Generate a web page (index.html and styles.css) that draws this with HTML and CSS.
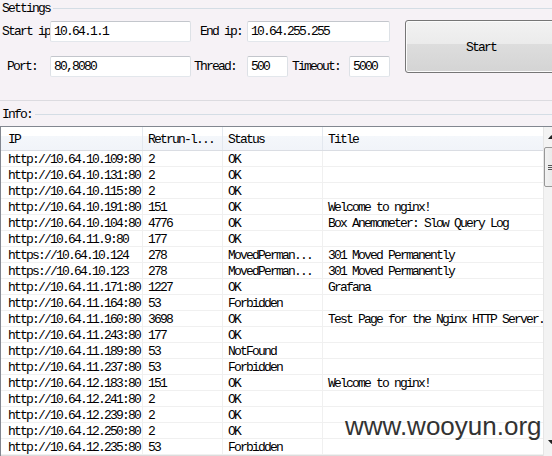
FILE: index.html
```html
<!DOCTYPE html>
<html>
<head>
<meta charset="utf-8">
<link rel="stylesheet" href="styles.css">
</head>
<body>
<div class="window">
  <section class="settings">
    <div class="legend"><span class="legend-text">Settings</span><span class="legend-line"></span></div>
    <div class="settings-body">
      <div class="fields">
        <div class="row">
          <label class="lbl lbl-start">Start ip</label>
          <div class="input w-ip">10.64.1.1</div>
          <label class="lbl lbl-end">End ip:</label>
          <div class="input w-ip2">10.64.255.255</div>
        </div>
        <div class="row">
          <label class="lbl lbl-port">Port:</label>
          <div class="input w-ip">80,8080</div>
          <label class="lbl lbl-thread">Thread:</label>
          <div class="input w-small">500</div>
          <label class="lbl lbl-timeout">Timeout:</label>
          <div class="input w-small">5000</div>
        </div>
      </div>
      <button class="start-btn">Start</button>
    </div>
  </section>
  <div class="legend info-legend"><span class="legend-text">Info:</span><span class="legend-line"></span></div>
  <div class="frame">
    <div class="list">
      <div class="hrow">
        <div class="c c1">IP</div>
        <div class="c c2">Retrun-l...</div>
        <div class="c c3">Status</div>
        <div class="c c4">Title</div>
      </div>
      <div class="rows">
        <div class="drow"><div class="c c1">http://10.64.10.109:80</div><div class="c c2">2</div><div class="c c3">OK</div><div class="c c4"></div></div>
        <div class="drow"><div class="c c1">http://10.64.10.131:80</div><div class="c c2">2</div><div class="c c3">OK</div><div class="c c4"></div></div>
        <div class="drow"><div class="c c1">http://10.64.10.115:80</div><div class="c c2">2</div><div class="c c3">OK</div><div class="c c4"></div></div>
        <div class="drow"><div class="c c1">http://10.64.10.191:80</div><div class="c c2">151</div><div class="c c3">OK</div><div class="c c4">Welcome to nginx!</div></div>
        <div class="drow"><div class="c c1">http://10.64.10.104:80</div><div class="c c2">4776</div><div class="c c3">OK</div><div class="c c4">Box Anemometer: Slow Query Log</div></div>
        <div class="drow"><div class="c c1">http://10.64.11.9:80</div><div class="c c2">177</div><div class="c c3">OK</div><div class="c c4"></div></div>
        <div class="drow"><div class="c c1">https://10.64.10.124</div><div class="c c2">278</div><div class="c c3">MovedPerman...</div><div class="c c4">301 Moved Permanently</div></div>
        <div class="drow"><div class="c c1">https://10.64.10.123</div><div class="c c2">278</div><div class="c c3">MovedPerman...</div><div class="c c4">301 Moved Permanently</div></div>
        <div class="drow"><div class="c c1">http://10.64.11.171:80</div><div class="c c2">1227</div><div class="c c3">OK</div><div class="c c4">Grafana</div></div>
        <div class="drow"><div class="c c1">http://10.64.11.164:80</div><div class="c c2">53</div><div class="c c3">Forbidden</div><div class="c c4"></div></div>
        <div class="drow"><div class="c c1">http://10.64.11.160:80</div><div class="c c2">3698</div><div class="c c3">OK</div><div class="c c4">Test Page for the Nginx HTTP Server.</div></div>
        <div class="drow"><div class="c c1">http://10.64.11.243:80</div><div class="c c2">177</div><div class="c c3">OK</div><div class="c c4"></div></div>
        <div class="drow"><div class="c c1">http://10.64.11.189:80</div><div class="c c2">53</div><div class="c c3">NotFound</div><div class="c c4"></div></div>
        <div class="drow"><div class="c c1">http://10.64.11.237:80</div><div class="c c2">53</div><div class="c c3">Forbidden</div><div class="c c4"></div></div>
        <div class="drow"><div class="c c1">http://10.64.12.183:80</div><div class="c c2">151</div><div class="c c3">OK</div><div class="c c4">Welcome to nginx!</div></div>
        <div class="drow"><div class="c c1">http://10.64.12.241:80</div><div class="c c2">2</div><div class="c c3">OK</div><div class="c c4"></div></div>
        <div class="drow"><div class="c c1">http://10.64.12.239:80</div><div class="c c2">2</div><div class="c c3">OK</div><div class="c c4"></div></div>
        <div class="drow"><div class="c c1">http://10.64.12.250:80</div><div class="c c2">2</div><div class="c c3">OK</div><div class="c c4"></div></div>
        <div class="drow"><div class="c c1">http://10.64.12.235:80</div><div class="c c2">53</div><div class="c c3">Forbidden</div><div class="c c4"></div></div>
      </div>
      <div class="hscroll"></div>
    </div>
    <div class="vscroll">
      <div class="sb-btn"><svg width="7" height="4" viewBox="0 0 7 4"><path d="M0 4 L3.5 0 L7 4 Z" fill="#222"/></svg></div>
      <div class="sb-thumb"><span class="grip"></span><span class="grip"></span><span class="grip"></span></div>
      <div class="sb-track"></div>
      <div class="sb-btn sb-down"><svg width="7" height="4" viewBox="0 0 7 4"><path d="M0 0 L3.5 4 L7 0 Z" fill="#222"/></svg></div>
    </div>
  </div>
  <div class="watermark">www.wooyun.org</div>
</div>
</body>
</html>
```
FILE: styles.css
```css
html, body {
  margin: 0;
  padding: 0;
  width: 552px;
  height: 456px;
  overflow: hidden;
  background: #f6f2f6;
}
.window {
  position: relative;
  width: 560px;
  height: 456px;
  font-family: "Liberation Mono", "DejaVu Sans Mono", monospace;
  font-size: 13px;
  letter-spacing: -1.8px;
  color: #000;
}
.settings {
  height: 100px;
  border-bottom: 1px solid #dcdbe0;
  box-sizing: content-box;
}
.legend {
  display: flex;
  align-items: center;
  height: 15px;
  padding-left: 2px;
}
.legend-text {
  line-height: 15px;
  padding-top: 1px;
}
.legend-line {
  flex: 1;
  height: 1px;
  background: #d4dde5;
  margin-left: 3px;
  margin-top: 1px;
}
.settings-body {
  display: flex;
  align-items: flex-start;
  padding-top: 6px;
}
.fields {
  display: flex;
  flex-direction: column;
  gap: 14px;
}
.row {
  display: flex;
  align-items: center;
  height: 21px;
}
.lbl {
  display: block;
  line-height: 21px;
  white-space: nowrap;
}
.lbl-start { padding-left: 2px; width: 48px; }
.lbl-end { margin-left: 9px; width: 47px; }
.lbl-port { padding-left: 7px; width: 43px; }
.lbl-thread { margin-left: 3px; width: 53px; }
.lbl-timeout { margin-left: 4px; width: 57px; }
.input {
  box-sizing: border-box;
  height: 21px;
  background: #fff;
  border: 1px solid;
  border-color: #c3c6cc #dde1e6 #e3e7ec #dde1e6;
  border-radius: 2px;
  padding-left: 3px;
  line-height: 19px;
  white-space: nowrap;
}
.w-ip { width: 141px; }
.w-ip2 { width: 143px; }
.w-small { width: 41px; }
.start-btn {
  margin-left: 15px;
  margin-top: -1px;
  width: 152px;
  height: 53px;
  border: 1px solid #767676;
  border-radius: 3px;
  background: linear-gradient(#f2f2f2 0%, #ebebeb 45%, #dddddd 46%, #d4d4d4 100%);
  box-shadow: inset 0 0 0 1px #fbfbfb;
  font-family: inherit;
  font-size: 13px;
  letter-spacing: -1.8px;
  color: #000;
  padding: 2px 0 0 0;
}
.info-legend {
  height: 25px;
}
.frame {
  display: grid;
  grid-template-columns: 542px 17px;
  border-top: 1px solid #828790;
  border-left: 1px solid #828790;
  height: 340px;
  background: #fff;
  overflow: hidden;
}
.list {
  display: flex;
  flex-direction: column;
  overflow: hidden;
}
.hrow {
  display: grid;
  grid-template-columns: 142px 80px 100px 220px;
  height: 24px;
  box-sizing: border-box;
  border-bottom: 1px solid #dadde3;
  background: linear-gradient(#ffffff 0%, #ffffff 40%, #f4f7fb 41%, #f1f4f9 100%);
}
.hrow .c {
  padding-top: 3px;
  line-height: 20px;
  border-right: 1px solid #e3e8ef;
}
.rows {
  height: 304px;
  flex: none;
  overflow: hidden;
}
.drow {
  display: grid;
  grid-template-columns: 142px 80px 100px 220px;
  height: 16px;
  box-sizing: border-box;
  border-bottom: 1px solid #f0f0f0;
}
.c {
  box-sizing: border-box;
  padding-left: 5px;
  white-space: nowrap;
  overflow: hidden;
}
.drow .c {
  padding-top: 2px;
  line-height: 13px;
  border-right: 1px solid #f0f0f0;
}
.c1 { padding-left: 7px; }
.c4 { border-right: none !important; }
.hscroll {
  height: 17px;
  flex: none;
  background: #f0f0f0;
  border-top: 1px solid #dcdcdc;
}
.vscroll {
  display: flex;
  flex-direction: column;
  background: #f3f3f3;
  border-left: 1px solid #e6e6e6;
}
.sb-btn {
  height: 17px;
  display: flex;
  align-items: center;
  justify-content: flex-start;
  padding-left: 4px;
  padding-top: 2px;
  box-sizing: border-box;
}
.sb-down {
  margin-top: auto;
  height: 16px;
  margin-bottom: 18px;
}
.sb-thumb {
  margin: 3px 0 0 0;
  height: 40px;
  border: 1px solid #979797;
  border-radius: 2px;
  background: linear-gradient(90deg, #f2f2f2, #e2e2e2);
  display: flex;
  flex-direction: column;
  justify-content: center;
  gap: 1px;
  padding-left: 3px;
  box-sizing: border-box;
}
.grip {
  display: block;
  width: 8px;
  height: 1px;
  background: #555;
}
.sb-track { flex: 1; }
.watermark {
  position: absolute;
  left: 345px;
  top: 411px;
  font-family: "Liberation Sans", Arial, sans-serif;
  font-size: 26px;
  letter-spacing: 0;
  line-height: 30px;
  color: #333;
}
```
